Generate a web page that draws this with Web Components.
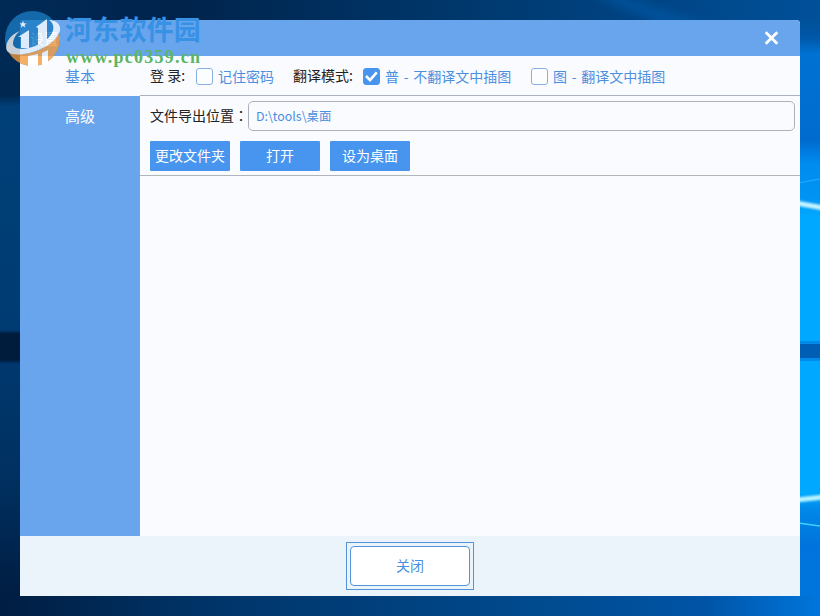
<!DOCTYPE html>
<html lang="zh-CN">
<head>
<meta charset="utf-8">
<title>设置</title>
<style>
  html, body { margin: 0; height: 100%; overflow: hidden; }
  body {
    font: 14px/20px "Noto Sans CJK SC", sans-serif;
    color: #222;
  }
  .colon { font-family: "Noto Sans CJK TC", sans-serif; }
</style>
</head>
<body>
<desk-top>
  <settings-window caption="设置">
    <side-item slot="nav" active>基本</side-item>
    <side-item slot="nav">高级</side-item>

    <setting-row>
      <row-label style="width:46px">登 录:</row-label>
      <check-box style="width:97px">记住密码</check-box>
      <row-label style="width:70px">翻译模式:</row-label>
      <check-box checked style="width:168px">普 - 不翻译文中插图</check-box>
      <check-box>图 - 翻译文中插图</check-box>
    </setting-row>
    <setting-row>
      <row-label style="width:98px">文件导出位置<span class="colon" lang="zh-TW">：</span></row-label>
      <path-field>D:\tools\桌面</path-field>
    </setting-row>
    <setting-row ruled>
      <push-button>更改文件夹</push-button>
      <push-button>打开</push-button>
      <push-button>设为桌面</push-button>
    </setting-row>

    <push-button slot="footer" outlined>关闭</push-button>
  </settings-window>
  <site-mark slot="overlay" url="www.pc0359.cn">河东软件园</site-mark>
</desk-top>

<script>
class DeskTop extends HTMLElement {
  constructor() {
    super();
    this.attachShadow({ mode: 'open' });
  }

  connectedCallback() {
    this.shadowRoot.innerHTML = `
      <style>
        :host {
          display: block;
          position: relative;
          box-sizing: border-box;
          width: 820px;
          height: 616px;
          padding: 20px;
        }
        .wallpaper { position: absolute; inset: 0; }
        .content { position: relative; }
      </style>
      <svg class="wallpaper" width="820" height="616" viewBox="0 0 820 616">
        <defs>
          <linearGradient id="top">
            <stop offset="0" stop-color="#002a57"/>
            <stop offset=".22" stop-color="#00244c"/>
            <stop offset=".6" stop-color="#003a70"/>
            <stop offset="1" stop-color="#00509a"/>
          </linearGradient>
          <linearGradient id="bottom">
            <stop offset="0" stop-color="#001d42"/>
            <stop offset=".25" stop-color="#003468"/>
            <stop offset=".65" stop-color="#004a8e"/>
            <stop offset=".86" stop-color="#0054a6"/>
            <stop offset="1" stop-color="#0076dc"/>
          </linearGradient>
          <linearGradient id="left" x2="0" y2="1">
            <stop offset="0" stop-color="#002a57"/>
            <stop offset=".13" stop-color="#002850"/>
            <stop offset=".15" stop-color="#004078"/>
            <stop offset=".5" stop-color="#003c74"/>
            <stop offset=".8" stop-color="#003060"/>
            <stop offset="1" stop-color="#001d42"/>
          </linearGradient>
          <linearGradient id="right" x2="0" y2="1">
            <stop offset="0" stop-color="#00509a"/>
            <stop offset=".03" stop-color="#0058a8"/>
            <stop offset=".06" stop-color="#0072d4"/>
            <stop offset=".21" stop-color="#006bce"/>
            <stop offset=".25" stop-color="#008cf0"/>
            <stop offset=".31" stop-color="#0094f4"/>
            <stop offset=".34" stop-color="#00a8ff"/>
            <stop offset=".82" stop-color="#00a8ff"/>
            <stop offset=".85" stop-color="#0088e8"/>
            <stop offset=".91" stop-color="#0074dc"/>
            <stop offset="1" stop-color="#0076dc"/>
          </linearGradient>
          <filter id="soft"><feGaussianBlur stdDeviation="1.2"/></filter>
          <filter id="beam"><feGaussianBlur stdDeviation="4"/></filter>
        </defs>
        <rect width="820" height="22" fill="url(#top)"/>
        <path d="M590 -6 L615 -6 L715 26 L665 26Z" fill="#005aa8" opacity=".6" filter="url(#beam)"/>
        <rect y="594" width="820" height="22" fill="url(#bottom)"/>
        <rect y="20" width="22" height="576" fill="url(#left)"/>
        <rect x="798" y="20" width="22" height="576" fill="url(#right)"/>
        <!-- window frame bars and light streaks -->
        <rect x="-4" y="332" width="26" height="30" fill="#001a3c" filter="url(#soft)"/>
        <rect x="798" y="341" width="22" height="20" fill="#008be8"/>
        <rect x="798" y="344" width="22" height="14" fill="#005eb4"/>
        <g filter="url(#soft)">
          <path d="M796 203 L824 208" stroke="#c4f4ff" stroke-width="5"/>
          <path d="M796 500 L824 497" stroke="#b8f4ff" stroke-width="5"/>
        </g>
        <path d="M798 183 L820 179" stroke="#26acff"/>
        <path d="M798 523 L820 526" stroke="#3fd0ff" stroke-width="1.5"/>
      </svg>
      <div class="content"><slot></slot></div>
      <slot name="overlay"></slot>
    `;
  }
}

class SettingsWindow extends HTMLElement {
  constructor() {
    super();
    this.attachShadow({ mode: 'open' });
  }

  connectedCallback() {
    this.shadowRoot.innerHTML = `
      <style>
        :host {
          display: grid;
          grid-template: 36px 480px 60px / 120px 1fr;
          height: 576px;
          border-radius: 4px 4px 0 0;
          overflow: hidden;
          background: #fafbff;
        }
        header, footer { grid-column: 1 / -1; display: flex; align-items: center; }
        header {
          justify-content: space-between;
          padding: 0 21px 0 10px;
          background: #69a5ec;
          color: #fff;
        }
        nav { background: #69a5ec; }
        footer { justify-content: center; background: #ebf3fb; }
      </style>
      <header>
        <span></span>
        <svg width="15" height="15" viewBox="0 0 15 15">
          <path d="M1.7 1.2 L13.3 12.8 M13.3 1.2 L1.7 12.8" stroke="#fff" stroke-width="2.8"/>
        </svg>
      </header>
      <nav><slot name="nav"></slot></nav>
      <main><slot></slot></main>
      <footer><slot name="footer"></slot></footer>
    `;
    this.shadowRoot.querySelector('span').textContent = this.getAttribute('caption');
  }
}

class SideItem extends HTMLElement {
  constructor() {
    super();
    this.attachShadow({ mode: 'open' });
  }

  connectedCallback() {
    this.shadowRoot.innerHTML = `
      <style>
        :host {
          display: flex;
          align-items: center;
          justify-content: center;
          box-sizing: border-box;
          height: 40px;
          padding-bottom: 1px;
          font-size: 15px;
          color: #fff;
        }
        :host([active]) { background: #fafbff; color: #4a90e0; }
      </style>
      <slot></slot>
    `;
  }
}

class SettingRow extends HTMLElement {
  constructor() {
    super();
    this.attachShadow({ mode: 'open' });
  }

  connectedCallback() {
    this.shadowRoot.innerHTML = `
      <style>
        :host {
          display: flex;
          align-items: center;
          box-sizing: border-box;
          height: 40px;
          padding: 0 5px 0 10px;
        }
        :host(:first-of-type) { border-bottom: 1px solid #a9b1bf; padding-top: 1px; }
        :host([ruled]) { gap: 10px; border-bottom: 1px solid #b0b4bb; padding-top: 1px; }
      </style>
      <slot></slot>
    `;
  }
}

class RowLabel extends HTMLElement {
  constructor() {
    super();
    this.attachShadow({ mode: 'open' });
  }

  connectedCallback() {
    this.shadowRoot.innerHTML = `
      <style>
        :host { display: block; flex: none; padding-bottom: 2px; white-space: nowrap; }
      </style>
      <slot></slot>
    `;
  }
}

class CheckBox extends HTMLElement {
  constructor() {
    super();
    this.attachShadow({ mode: 'open' });
  }

  connectedCallback() {
    this.shadowRoot.innerHTML = `
      <style>
        :host {
          display: flex;
          align-items: center;
          gap: 5px;
          flex: none;
          white-space: nowrap;
          word-spacing: 1.5px;
          color: #4a90e0;
        }
        svg { flex: none; }
        rect { fill: #fcfdff; stroke: #86b0e2; }
        path { display: none; }
        :host([checked]) rect { fill: #4795ef; stroke: #4795ef; }
        :host([checked]) path { display: inline; }
      </style>
      <svg width="17" height="17" viewBox="0 0 17 17">
        <rect x=".5" y=".5" width="16" height="16" rx="2.5"/>
        <path d="M3 8 L7 12 L13.8 4.4" fill="none" stroke="#fff" stroke-width="2.6"/>
      </svg>
      <span><slot></slot></span>
    `;
  }
}

class PathField extends HTMLElement {
  constructor() {
    super();
    this.attachShadow({ mode: 'open' });
  }

  connectedCallback() {
    this.shadowRoot.innerHTML = `
      <style>
        :host {
          display: flex;
          align-items: center;
          flex: 1;
          box-sizing: border-box;
          height: 30px;
          padding: 0 7px;
          border: 1px solid #adb0ba;
          border-radius: 5px;
          font-size: 12.4px;
          color: #4a90e0;
        }
      </style>
      <slot></slot>
    `;
  }
}

class PushButton extends HTMLElement {
  constructor() {
    super();
    this.attachShadow({ mode: 'open' });
  }

  connectedCallback() {
    this.shadowRoot.innerHTML = `
      <style>
        :host {
          display: flex;
          align-items: center;
          justify-content: center;
          box-sizing: border-box;
          width: 80px;
          height: 30px;
          padding-bottom: 2px;
          border-radius: 1px;
          background: #4795ef;
          color: #fff;
        }
        :host([outlined]) {
          position: relative;
          width: 120px;
          height: 40px;
          border: 1px solid #5393d8;
          border-radius: 4px;
          background: #fff;
          color: #4a90e0;
        }
        /* square focus frame around the rounded button */
        :host([outlined])::before {
          content: "";
          position: absolute;
          inset: -5px;
          border: 1px solid #5393d8;
        }
      </style>
      <slot></slot>
    `;
  }
}

class SiteMark extends HTMLElement {
  constructor() {
    super();
    this.attachShadow({ mode: 'open' });
  }

  connectedCallback() {
    this.shadowRoot.innerHTML = `
      <style>
        :host {
          position: absolute;
          left: 4px;
          top: 10px;
          display: flex;
          gap: 3px;
        }
        svg { opacity: .78; }
        .words { padding-top: 3px; white-space: nowrap; }
        .name {
          font-size: 27px;
          line-height: 32px;
          font-weight: 700;
          letter-spacing: .2px;
          color: #3791e5;
        }
        .url {
          margin: 2px 0 0 1px;
          font: 700 18px/20px "Liberation Serif", serif;
          letter-spacing: 1.25px;
          color: #5cb562;
        }
      </style>
      <svg width="58" height="58" viewBox="0 0 58 58">
        <defs>
          <clipPath id="disc"><circle cx="28.5" cy="28.5" r="27.5"/></clipPath>
        </defs>
        <g clip-path="url(#disc)">
          <rect width="58" height="58" fill="#1a7cc2"/>
          <path d="M0 38 C14 50 42 44 58 20 V58 H0Z" fill="#f79a3a"/>
        </g>
        <path d="M16 21 C5 25 0 35 3 41 C10 50 49 41 56 21 C57 15 53 10 45 10 C53 15 50 27 36 34 C24 40 10 41 9 34 C9 29 12 24 16 21Z" fill="#fff"/>
        <path d="M14 27 L25 20 V38 L17 38 V27Z M32 17 L43 9 V31 L34 35 V18Z" fill="#fff"/>
        <path d="M24 46 L34 44 V57 H24Z M38 43 L44 40 V55 L38 57Z" fill="#fff"/>
        <path d="M19 11 L20 13.2 L22.5 13.4 L20.6 15 L21.2 17.4 L19 16.1 L16.8 17.4 L17.4 15 L15.5 13.4 L18 13.2Z" fill="#fff"/>
      </svg>
      <div class="words">
        <div class="name"><slot></slot></div>
        <div class="url">${this.getAttribute('url')}</div>
      </div>
    `;
  }
}

customElements.define('desk-top', DeskTop);
customElements.define('settings-window', SettingsWindow);
customElements.define('side-item', SideItem);
customElements.define('setting-row', SettingRow);
customElements.define('row-label', RowLabel);
customElements.define('check-box', CheckBox);
customElements.define('path-field', PathField);
customElements.define('push-button', PushButton);
customElements.define('site-mark', SiteMark);
</script>
</body>
</html>
